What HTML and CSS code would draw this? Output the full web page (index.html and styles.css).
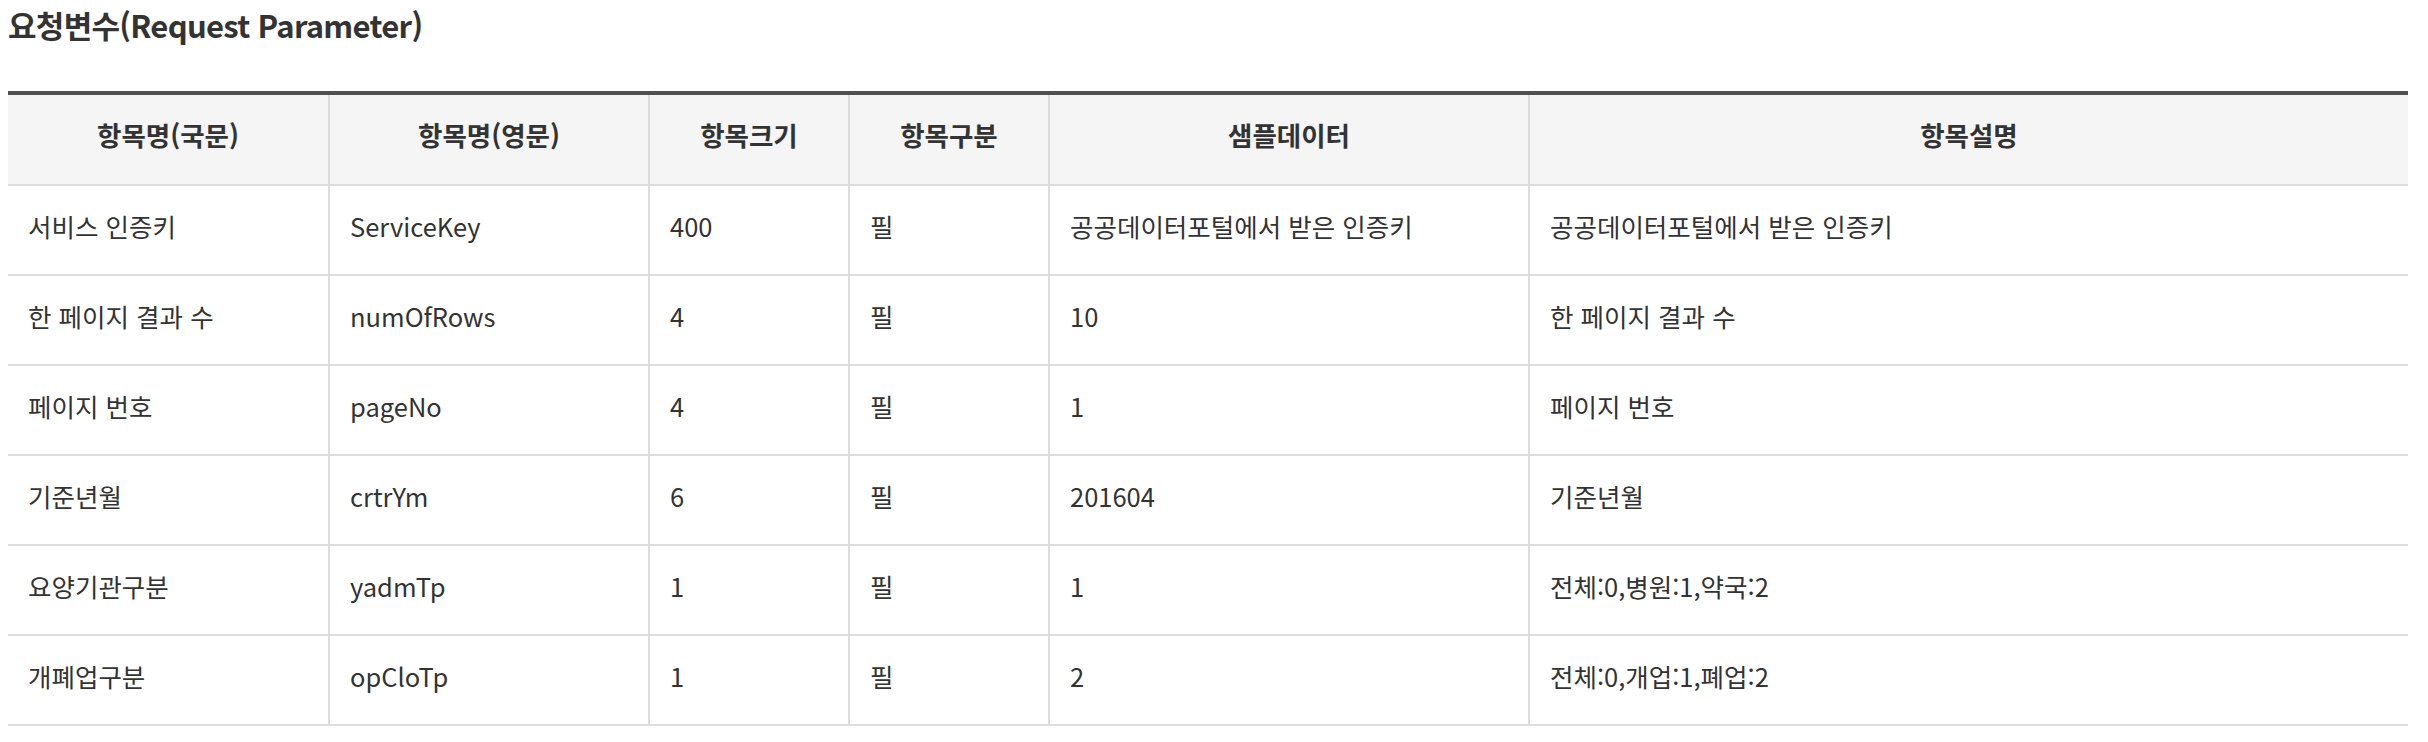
FILE: index.html
```html
<!DOCTYPE html>
<html lang="ko">
<head>
<meta charset="utf-8">
<title>요청변수</title>
<link rel="stylesheet" href="styles.css">
</head>
<body>
<div class="page">
  <h2 class="title">요청변수(Request Parameter)</h2>
  <table class="param-table">
    <colgroup>
      <col class="c1"><col class="c2"><col class="c3"><col class="c4"><col class="c5"><col class="c6">
    </colgroup>
    <thead>
      <tr>
        <th>항목명(국문)</th>
        <th>항목명(영문)</th>
        <th>항목크기</th>
        <th>항목구분</th>
        <th>샘플데이터</th>
        <th>항목설명</th>
      </tr>
    </thead>
    <tbody>
      <tr>
        <td>서비스 인증키</td>
        <td>ServiceKey</td>
        <td>400</td>
        <td>필</td>
        <td>공공데이터포털에서 받은 인증키</td>
        <td>공공데이터포털에서 받은 인증키</td>
      </tr>
      <tr>
        <td>한 페이지 결과 수</td>
        <td>numOfRows</td>
        <td>4</td>
        <td>필</td>
        <td>10</td>
        <td>한 페이지 결과 수</td>
      </tr>
      <tr>
        <td>페이지 번호</td>
        <td>pageNo</td>
        <td>4</td>
        <td>필</td>
        <td>1</td>
        <td>페이지 번호</td>
      </tr>
      <tr>
        <td>기준년월</td>
        <td>crtrYm</td>
        <td>6</td>
        <td>필</td>
        <td>201604</td>
        <td>기준년월</td>
      </tr>
      <tr>
        <td>요양기관구분</td>
        <td>yadmTp</td>
        <td>1</td>
        <td>필</td>
        <td>1</td>
        <td>전체:0,병원:1,약국:2</td>
      </tr>
      <tr>
        <td>개폐업구분</td>
        <td>opCloTp</td>
        <td>1</td>
        <td>필</td>
        <td>2</td>
        <td>전체:0,개업:1,폐업:2</td>
      </tr>
    </tbody>
  </table>
</div>
</body>
</html>
```

FILE: styles.css
```css
html, body {
  margin: 0;
  padding: 0;
  background: #ffffff;
}

.page {
  padding: 0 8px;
  font-family: "Noto Sans CJK KR", "Noto Sans", sans-serif;
  color: #333333;
}

.title {
  margin: 6px 0 0;
  font-size: 31px;
  line-height: 37px;
  font-weight: 700;
  letter-spacing: -0.7px;
  color: #333333;
}

.param-table {
  margin-top: 48px;
  width: 2400px;
  table-layout: fixed;
  border-collapse: separate;
  border-spacing: 0;
  border-top: 4px solid #505050;
}

.c1 { width: 320px; }
.c2 { width: 320px; }
.c3 { width: 200px; }
.c4 { width: 200px; }
.c5 { width: 480px; }
.c6 { width: 880px; }

.param-table th,
.param-table td {
  line-height: 36px;
  border-bottom: 2px solid #dddddd;
  border-left: 2px solid #dddddd;
  white-space: nowrap;
}

.param-table th:first-child,
.param-table td:first-child {
  border-left: none;
}

.param-table th {
  background: #f5f5f5;
  font-size: 26.5px;
  font-weight: 700;
  text-align: center;
  padding: 22px 20px 31px;
  color: #333333;
}

.param-table td {
  font-size: 25.5px;
  text-align: left;
  padding: 22px 20px 30px;
  font-weight: 400;
  color: #333333;
}
```
